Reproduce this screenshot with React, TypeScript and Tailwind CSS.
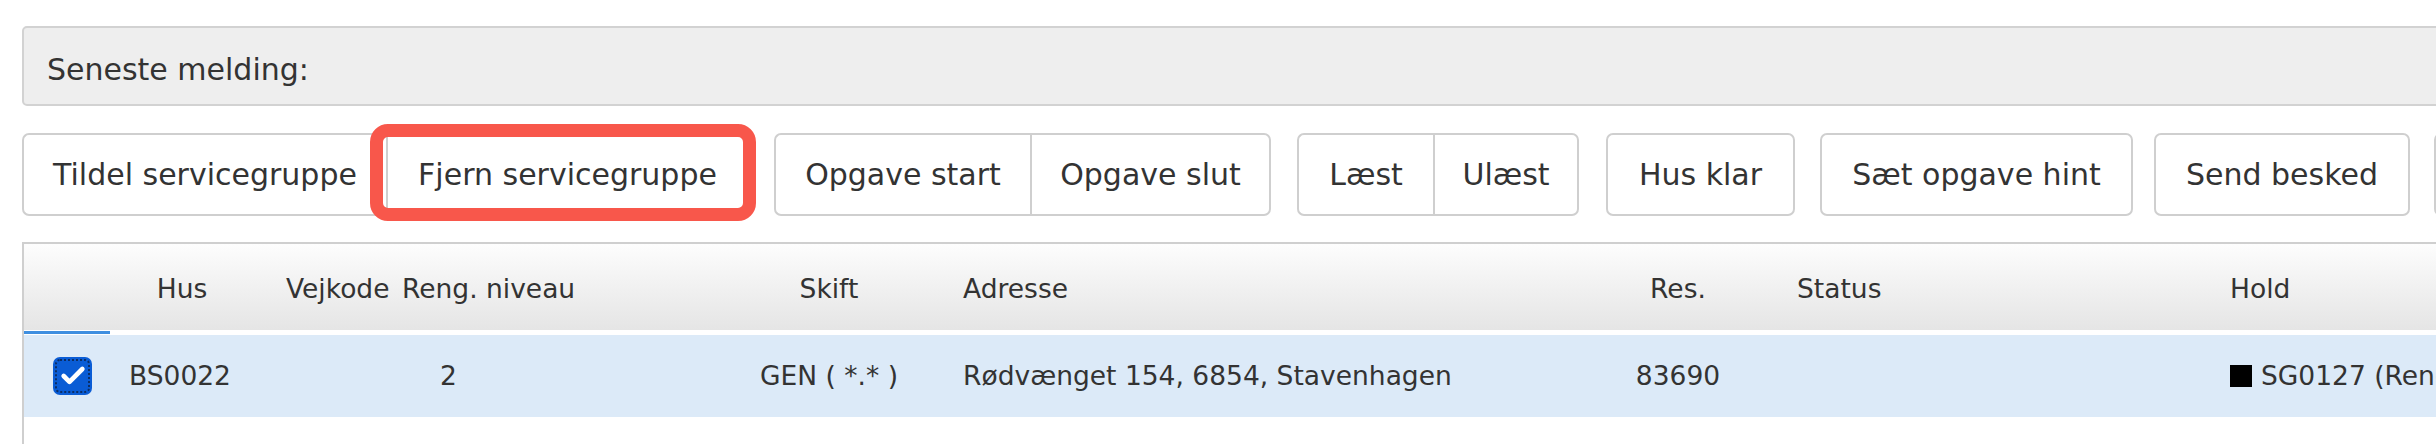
import { Check } from "lucide-react"

const font = "font-['DejaVu_Sans','Verdana',sans-serif]"
const cols = "grid grid-cols-[84px_148px_134px_310px_258px_642px_156px_444px_1fr]"

function Btn({ label, width, first, last, single }: { label: string; width: string; first?: boolean; last?: boolean; single?: boolean }) {
  let cls = "flex items-center justify-center h-full bg-white border-[#cfcfcf] border-y-2 " + width
  if (single) cls += " border-x-2 rounded-[7px]"
  else if (first) cls += " border-l-2 rounded-l-[7px]"
  else if (last) cls += " border-x-2 rounded-r-[7px]"
  return <div className={cls}>{label}</div>
}

export default function App() {
  return (
    <div className={`w-[2436px] h-[444px] overflow-hidden bg-white text-[#333333] ${font}`}>
      <div className="w-[2700px] pl-[22px] pt-[26px]">
        {/* message bar */}
        <div className="h-[80px] bg-[#eeeeee] border-2 border-[#d2d2d2] rounded-[5px] flex items-center pl-[23px] pt-[6px] text-[30px]">
          Seneste melding:
        </div>

        {/* toolbar */}
        <div className="mt-[27px] h-[83px] flex gap-[25px] text-[30px]">
          <div className="flex h-full">
            <Btn label="Tildel servicegruppe" width="w-[364px]" first />
            <div className="relative h-full">
              <Btn label="Fjern servicegruppe" width="w-[363px]" last />
              <div className="absolute -left-[16px] -right-[7px] -top-[9px] -bottom-[5px] border-[13px] border-[#f8574b] rounded-[18px]" />
            </div>
          </div>
          <div className="flex h-full">
            <Btn label="Opgave start" width="w-[256px]" first />
            <Btn label="Opgave slut" width="w-[241px]" last />
          </div>
          <div className="flex h-full ml-[1px]">
            <Btn label="Læst" width="w-[136px]" first />
            <Btn label="Ulæst" width="w-[146px]" last />
          </div>
          <div className="flex h-full ml-[2px]">
            <Btn label="Hus klar" width="w-[189px]" single />
          </div>
          <div className="flex h-full">
            <Btn label="Sæt opgave hint" width="w-[313px]" single />
          </div>
          <div className="flex h-full -ml-[4px]">
            <Btn label="Send besked" width="w-[256px]" single />
          </div>
          <div className="flex h-full -ml-[1px]">
            <Btn label="Vis på kort" width="w-[220px]" single />
          </div>
        </div>

        {/* table */}
        <div className="mt-[26px] border-l-2 border-t-2 border-[#cfcfcf] text-[26.5px]">
          <div className={`${cols} h-[86px] items-center bg-gradient-to-b from-[#fdfdfd] to-[#e5e5e5] pt-[4px]`}>
            <div />
            <div className="text-center">Hus</div>
            <div className="pl-[30px]">Vejkode</div>
            <div className="pl-[12px] whitespace-nowrap">Reng. niveau</div>
            <div className="text-center">Skift</div>
            <div className="pl-[5px]">Adresse</div>
            <div className="text-center">Res.</div>
            <div className="pl-[41px]">Status</div>
            <div className="pl-[30px]">Hold</div>
          </div>
          <div className="h-[5px] bg-white flex">
            <div className="w-[86px] h-[3px] mt-[1px] bg-[#3f8fe0]" />
          </div>
          <div className={`${cols} h-[82px] items-center bg-[#dceaf8]`}>
            <div className="pl-[29px]">
              <div className="w-[39px] h-[38px] rounded-[7px] bg-[#0a5cd5] flex items-center justify-center outline-dotted outline-2 outline-[#0b2e66] -outline-offset-[4px]">
                <Check className="w-[28px] h-[28px] text-white" strokeWidth={4} />
              </div>
            </div>
            <div className="text-center pr-[4px]">BS0022</div>
            <div />
            <div className="pl-[50px]">2</div>
            <div className="text-center">GEN ( *.* )</div>
            <div className="pl-[5px]">Rødvænget 154, 6854, Stavenhagen</div>
            <div className="text-center">83690</div>
            <div />
            <div className="pl-[30px] flex items-center gap-[9px] whitespace-nowrap">
              <span className="w-[22px] h-[22px] bg-black inline-block" />
              SG0127 (Rengøring Syd)
            </div>
          </div>
          <div className={`${cols} h-[82px] items-start pt-[20px]`}>
            <div />
            <div />
            <div />
            <div />
            <div />
            <div />
            <div />
            <div />
            <div className="pl-[30px] whitespace-nowrap">Fire faste</div>
          </div>
        </div>
      </div>
    </div>
  )
}
